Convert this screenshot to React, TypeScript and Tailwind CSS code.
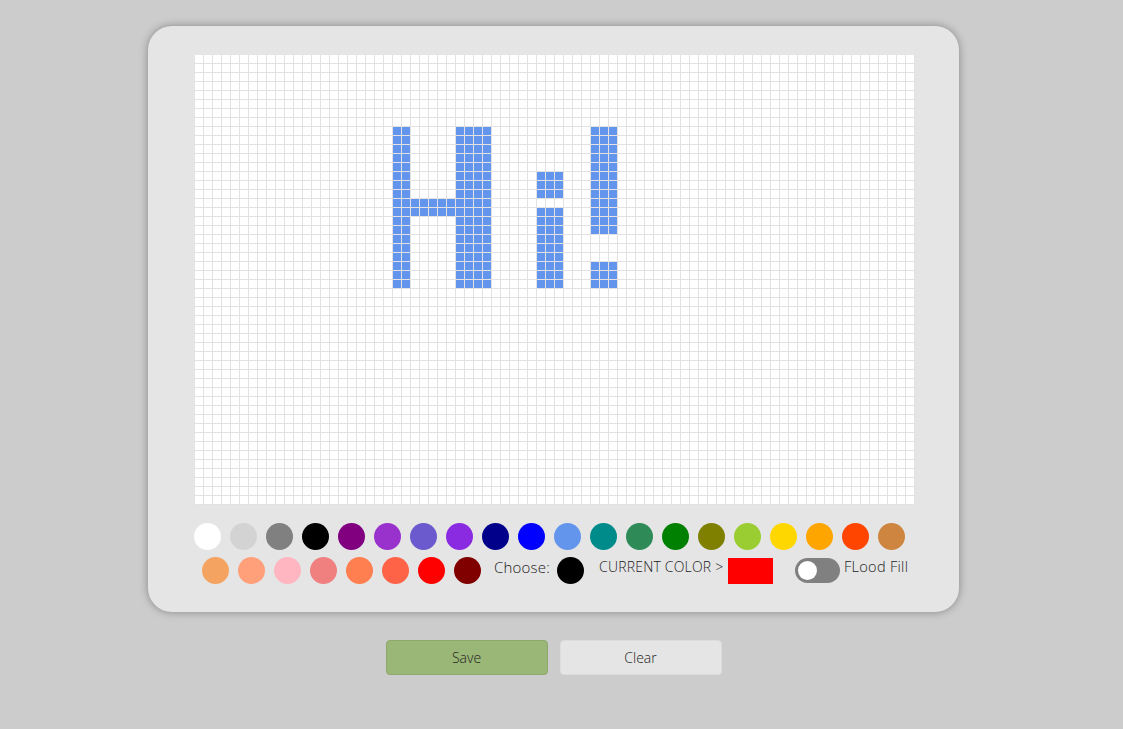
import React from "react";

const COLS = 80;
const ROWS = 50;

function buildFilled(): Set<string> {
  const s = new Set<string>();
  const rect = (c0: number, c1: number, r0: number, r1: number) => {
    for (let c = c0; c <= c1; c++) for (let r = r0; r <= r1; r++) s.add(`${r}-${c}`);
  };
  // H
  rect(22, 23, 8, 25);
  rect(29, 32, 8, 25);
  rect(24, 28, 16, 17);
  // i
  rect(38, 40, 13, 15);
  rect(38, 40, 17, 25);
  // !
  rect(44, 46, 8, 19);
  rect(44, 46, 23, 25);
  return s;
}

const filled = buildFilled();

const row1 = [
  "#ffffff", "#d3d3d3", "#808080", "#000000", "#800080", "#9932cc", "#6a5acd", "#8a2be2", "#00008b", "#0000ff",
  "#6495ed", "#008b8b", "#2e8b57", "#008000", "#808000", "#9acd32", "#ffd700", "#ffa500", "#ff4500", "#cd853f",
];
const row2 = ["#f4a460", "#ffa07a", "#ffb6c1", "#f08080", "#ff7f50", "#ff6347", "#ff0000", "#800000"];

export default function App() {
  const cells: React.ReactNode[] = [];
  for (let r = 0; r < ROWS; r++) {
    for (let c = 0; c < COLS; c++) {
      const on = filled.has(`${r}-${c}`);
      cells.push(
        <div
          key={`${r}-${c}`}
          className={
            on
              ? "w-[9px] h-[9px] border-r border-b border-[#e2e2e2] bg-[#6495ed]"
              : "w-[9px] h-[9px] border-r border-b border-[#e2e2e2] bg-white"
          }
        />
      );
    }
  }

  return (
    <div
      className="min-h-screen w-full bg-[#cccccc] flex flex-col items-center pt-[26px] pr-[16px] text-[#222]"
      style={{ fontFamily: "'Open Sans', Inter, sans-serif" }}
    >
      <div className="w-[811px] h-[586px] bg-[#e5e5e5] rounded-[24px] shadow-[0_0_8px_rgba(0,0,0,0.35)] flex flex-col pt-[29px]">
        <div className="pl-[47px]">
          <div className="grid grid-cols-[repeat(80,9px)] w-[720px]">{cells}</div>
        </div>
        <div className="flex gap-[9px] pl-[46px] mt-[18px]">
          {row1.map((c) => (
            <div key={c} className="w-[27px] h-[27px] rounded-full" style={{ backgroundColor: c }} />
          ))}
        </div>
        <div className="flex items-center pl-[54px] mt-[7px] h-[27px]">
          <div className="flex gap-[9px]">
            {row2.map((c) => (
              <div key={c} className="w-[27px] h-[27px] rounded-full" style={{ backgroundColor: c }} />
            ))}
          </div>
          <span className="ml-[13px] w-[57px] text-[15px] font-light leading-none -mt-[7px] whitespace-nowrap tracking-[0.2px]">Choose:</span>
          <div className="ml-[6px] w-[27px] h-[27px] rounded-full bg-black" />
          <span className="ml-[15px] w-[124px] text-[14px] font-light leading-none -mt-[7px] whitespace-nowrap tracking-[0.2px]">CURRENT COLOR &gt;</span>
          <div className="ml-[5px] w-[45px] h-[26px] bg-[#ff0000]" />
          <div className="ml-[22px] w-[45px] h-[25px] rounded-full bg-[#808080] flex items-center pl-[3px]">
            <div className="w-[19px] h-[19px] rounded-full bg-white" />
          </div>
          <span className="ml-[4px] text-[14.5px] font-light leading-none -mt-[7px] whitespace-nowrap tracking-[0.3px]">FLood Fill</span>
        </div>
      </div>
      <div className="flex gap-[12px] mt-[28px]">
        <button className="w-[162px] h-[35px] rounded-[4px] bg-[#9bb777] border border-[#8aa96a] text-[14px] font-light text-[#222]">
          Save
        </button>
        <button className="w-[162px] h-[35px] rounded-[4px] bg-[#e5e5e5] border border-[#dddddd] text-[14px] font-light text-[#222]">
          Clear
        </button>
      </div>
    </div>
  );
}
